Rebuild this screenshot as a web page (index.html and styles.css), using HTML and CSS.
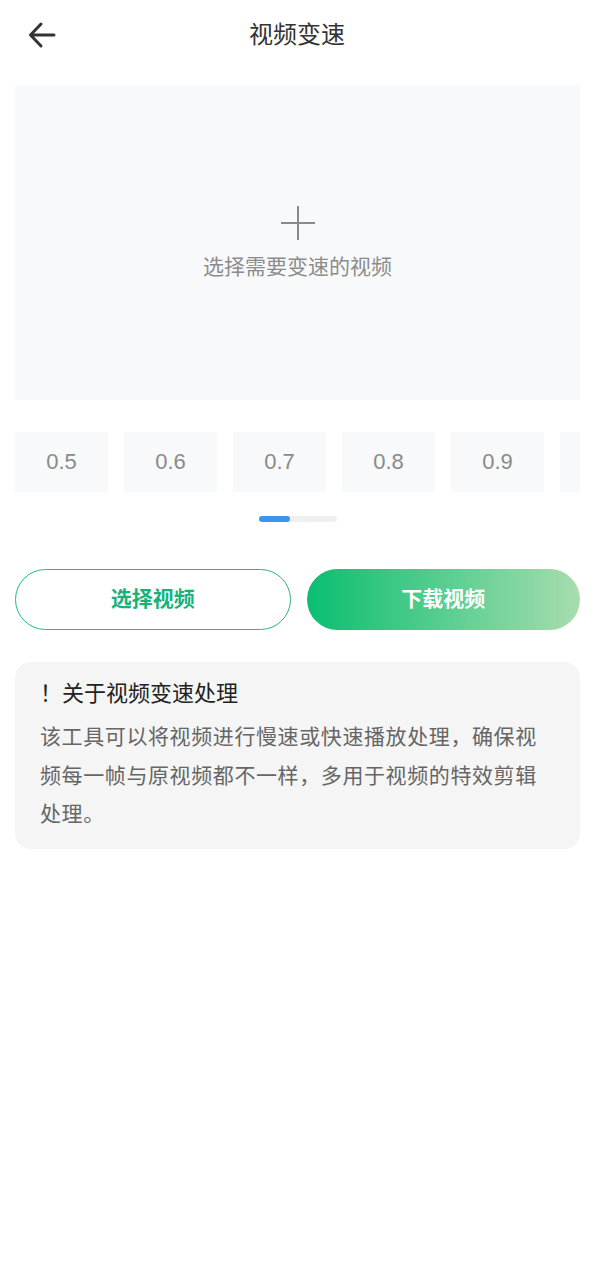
FILE: index.html
```html
<!DOCTYPE html>
<html>

<head>
	<meta charset="utf-8">
	<link rel="stylesheet" href="styles.css">
</head>

<body>
	<div class="header">
		<a class="back">
			<svg width="30" height="30" viewBox="0 0 30 30">
				<path d="M27 15 H4 M14 4 L3.5 15 L14 26" fill="none" stroke="#333" stroke-width="3" stroke-linecap="round" stroke-linejoin="round" />
			</svg>
		</a>
		<h1>视频变速</h1>
	</div>

	<div class="container">
		<div class="upload">
			<svg width="36" height="36" viewBox="0 0 36 36">
				<path d="M18 1 V35 M1 18 H35" stroke="#8a8a8a" stroke-width="2" />
			</svg>
			<p>选择需要变速的视频</p>
		</div>

		<div class="speeds">
			<div class="speed">0.5</div>
			<div class="speed">0.6</div>
			<div class="speed">0.7</div>
			<div class="speed">0.8</div>
			<div class="speed">0.9</div>
			<div class="speed"></div>
		</div>

		<div class="scrollbar">
			<div class="thumb"></div>
		</div>

		<div class="actions">
			<div class="btn outline">选择视频</div>
			<div class="btn filled">下载视频</div>
		</div>

		<div class="tips">
			<h3>！关于视频变速处理</h3>
			<p>该工具可以将视频进行慢速或快速播放处理，确保视频每一帧与原视频都不一样，多用于视频的特效剪辑处理。</p>
		</div>
	</div>
</body>

</html>
```

FILE: styles.css
```css
body {
	margin: 0;
	background-color: #fff;
	font-family: "Noto Sans CJK SC", "Noto Sans", sans-serif;
	color: #333;
}

.header {
	height: 70px;
	box-sizing: border-box;
	padding-bottom: 4px;
	display: flex;
	align-items: center;
	justify-content: center;
	position: relative;
}

.header h1 {
	margin: 0;
	font-size: 24px;
	line-height: 30px;
	font-weight: 400;
	color: #333;
}

.back {
	position: absolute;
	left: 27px;
	top: 20px;
	display: flex;
}

.container {
	padding: 15px 14px 0 15px;
}

.upload {
	height: 315px;
	background-color: #f8f9fb;
	display: flex;
	flex-direction: column;
	align-items: center;
	justify-content: center;
}

.upload p {
	margin: 9px 0 0;
	font-size: 21px;
	line-height: 30px;
	color: #8c8c8c;
}

.speeds {
	margin-top: 32px;
	display: flex;
	gap: 16px;
	overflow: hidden;
}

.speed {
	flex: 0 0 93px;
	height: 60px;
	background-color: #f8f9fb;
	display: flex;
	align-items: center;
	justify-content: center;
	font-family: "Liberation Sans", Arial, sans-serif;
	font-size: 22px;
	color: #8a8a8a;
}

.scrollbar {
	width: 78px;
	height: 6px;
	margin: 24px auto 0;
	background-color: #f0f0f0;
	border-radius: 3px;
}

.thumb {
	width: 31px;
	height: 6px;
	background-color: #3a95ef;
	border-radius: 3px;
}

.actions {
	margin-top: 47px;
	display: flex;
	gap: 16px;
}

.btn {
	flex: 1;
	height: 61px;
	box-sizing: border-box;
	padding-bottom: 4px;
	border-radius: 31px;
	display: flex;
	align-items: center;
	justify-content: center;
	font-size: 21px;
	line-height: 1;
	font-weight: 700;
}

.outline {
	border: 1px solid #2ab684;
	color: #17b27a;
}

.filled {
	background: linear-gradient(90deg, #0abe72, #a7ddae);
	color: #fff;
}

.tips {
	margin-top: 32px;
	background-color: #f5f5f5;
	border-radius: 16px;
	padding: 14px 25px 17px;
}

.tips h3 {
	margin: 0;
	font-size: 22px;
	line-height: 30px;
	font-weight: 400;
	color: #222;
}

.tips p {
	margin: 10px 0 0;
	font-size: 21px;
	line-height: 38.5px;
	color: #666;
	letter-spacing: 0.6px;
}
```
